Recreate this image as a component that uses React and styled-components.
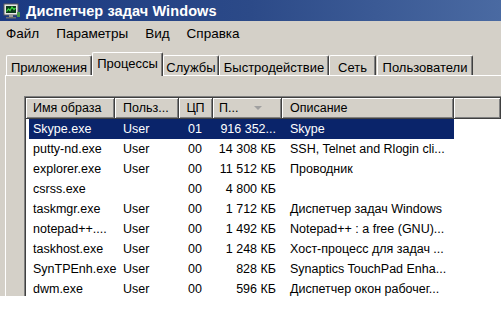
import styled, { createGlobalStyle } from "styled-components";

const GlobalStyle = createGlobalStyle`
  html, body {
    margin: 0;
    padding: 0;
    background: #ffffff;
  }
  body {
    font-family: "Liberation Sans", Arial, sans-serif;
  }
`;

const Window = styled.div`
  width: 501px;
  height: 296px;
  overflow: hidden;
  background-color: #d4d0c8;
  display: flex;
  flex-direction: column;
`;

const TitleBar = styled.div`
  height: 21px;
  flex-shrink: 0;
  display: flex;
  align-items: center;
  padding-left: 3px;
  gap: 6px;
  background: linear-gradient(to right, #1b3a82 0%, #2c4a88 50%, #4a6aa2 100%);
`;

const Title = styled.span`
  color: #ffffff;
  font-weight: 700;
  font-size: 14.5px;
  letter-spacing: 0.1px;
  white-space: nowrap;
`;

const MenuBar = styled.div`
  height: 24px;
  flex-shrink: 0;
  display: flex;
  align-items: center;
  padding-left: 6px;
  gap: 17px;
`;

const MenuItem = styled.span`
  font-size: 13.5px;
  color: #000000;
  white-space: nowrap;
`;

const TabStrip = styled.div`
  margin-top: 7px;
  padding-left: 6px;
  height: 23px;
  flex-shrink: 0;
  display: flex;
  align-items: flex-end;
  position: relative;
  z-index: 1;
`;

const Tab = styled.div`
  box-sizing: border-box;
  width: ${(props) => props.$w}px;
  margin-left: ${(props) => props.$gap || 0}px;
  height: ${(props) => (props.$active ? 24 : 20)}px;
  margin-bottom: ${(props) => (props.$active ? -1 : 0)}px;
  padding-top: ${(props) => (props.$active ? 3 : 4)}px;
  line-height: 16px;
  text-align: center;
  font-size: 13px;
  color: #000000;
  white-space: nowrap;
  background-color: #d4d0c8;
  border-top: 1px solid #ffffff;
  border-left: 1px solid #ffffff;
  border-right: 1px solid #404040;
  border-top-left-radius: 2px;
  border-top-right-radius: 2px;
  box-shadow: inset -1px 0 0 #808080;
`;

const Panel = styled.div`
  flex: 1;
  margin-left: 5px;
  border-top: 1px solid #ffffff;
  border-left: 1px solid #ffffff;
  padding: 20px 0 0 18px;
  display: flex;
  min-height: 0;
`;

const ListBox = styled.div`
  flex: 1;
  background-color: #ffffff;
  border-top: 1px solid #808080;
  border-left: 1px solid #808080;
  box-shadow: inset 1px 1px 0 #404040;
  padding: 1px 0 0 1px;
  display: flex;
  flex-direction: column;
`;

const HeaderRow = styled.div`
  display: flex;
  height: 21px;
  flex-shrink: 0;
`;

const HeaderCell = styled.div`
  box-sizing: border-box;
  width: ${(props) => (props.$w ? `${props.$w}px` : "auto")};
  flex: ${(props) => (props.$w ? "none" : 1)};
  display: flex;
  align-items: center;
  justify-content: ${(props) => (props.$center ? "center" : "flex-start")};
  padding-left: ${(props) => (props.$center ? 0 : props.$pad)}px;
  font-size: 12.5px;
  color: #000000;
  white-space: nowrap;
  background-color: #d4d0c8;
  border-right: 1px solid #404040;
  border-bottom: 1px solid #404040;
  box-shadow: inset 1px 1px 0 #ffffff, inset -1px -1px 0 #808080;
`;

const SortArrow = styled.span`
  width: 0;
  height: 0;
  margin-left: auto;
  margin-right: 19px;
  border-left: 4px solid transparent;
  border-right: 4px solid transparent;
  border-top: 4px solid #a0a0a0;
`;

const Rows = styled.div`
  display: flex;
  flex-direction: column;
  padding-left: 3px;
`;

const Row = styled.div`
  display: flex;
  height: 20px;
  width: 425px;
  background-color: ${(props) => (props.$selected ? "#0a246a" : "transparent")};
  color: ${(props) => (props.$selected ? "#ffffff" : "#000000")};
`;

const Cell = styled.div`
  box-sizing: border-box;
  width: ${(props) => props.$w}px;
  flex-shrink: 0;
  display: flex;
  align-items: center;
  justify-content: ${(props) => (props.$right ? "flex-end" : "flex-start")};
  padding-left: ${(props) => (props.$right ? 0 : props.$pad)}px;
  padding-right: ${(props) => (props.$right ? props.$pad : 0)}px;
  font-size: 12.5px;
  white-space: nowrap;
`;

const TaskIcon = () => (
  <svg width="17" height="16" viewBox="0 0 17 16">
    <rect x="1" y="1" width="14" height="11" fill="#e8e8e8" stroke="#5a5a5a" strokeWidth="1" />
    <rect x="3" y="3" width="10" height="7" fill="#0c3a1c" />
    <polyline points="3.5,8.5 5.5,6 7,7.5 9,4 11,6.5 12.5,5" fill="none" stroke="#44e044" strokeWidth="1.2" />
    <rect x="6" y="12" width="4" height="2" fill="#9a9a9a" />
    <rect x="3" y="14" width="10" height="1.5" fill="#6e6e6e" />
    <rect x="14" y="9" width="3" height="5" fill="#4a9a4a" />
  </svg>
);

const menu = ["Файл", "Параметры", "Вид", "Справка"];

const tabs = [
  { name: "Приложения", w: 86 },
  { name: "Процессы", w: 71, active: true },
  { name: "Службы", w: 56 },
  { name: "Быстродействие", w: 110 },
  { name: "Сеть", w: 47 },
  { name: "Пользователи", w: 96, gap: 1 },
];

const processes = [
  { name: "Skype.exe", user: "User", cpu: "01", mem: "916 352...", desc: "Skype", selected: true },
  { name: "putty-nd.exe", user: "User", cpu: "00", mem: "14 308 КБ", desc: "SSH, Telnet and Rlogin cli..." },
  { name: "explorer.exe", user: "User", cpu: "00", mem: "11 512 КБ", desc: "Проводник" },
  { name: "csrss.exe", user: "", cpu: "00", mem: "4 800 КБ", desc: "" },
  { name: "taskmgr.exe", user: "User", cpu: "00", mem: "1 712 КБ", desc: "Диспетчер задач Windows" },
  { name: "notepad++....", user: "User", cpu: "00", mem: "1 492 КБ", desc: "Notepad++ : a free (GNU)..." },
  { name: "taskhost.exe", user: "User", cpu: "00", mem: "1 248 КБ", desc: "Хост-процесс для задач ..." },
  { name: "SynTPEnh.exe", user: "User", cpu: "00", mem: "828 КБ", desc: "Synaptics TouchPad Enha..." },
  { name: "dwm.exe", user: "User", cpu: "00", mem: "596 КБ", desc: "Диспетчер окон рабочег..." },
];

const App = () => {
  return (
    <>
      <GlobalStyle />
      <Window>
        <TitleBar>
          <TaskIcon />
          <Title>Диспетчер задач Windows</Title>
        </TitleBar>
        <MenuBar>
          {menu.map((m) => (
            <MenuItem key={m}>{m}</MenuItem>
          ))}
        </MenuBar>
        <TabStrip>
          {tabs.map((t) => (
            <Tab key={t.name} $w={t.w} $active={t.active} $gap={t.gap}>
              {t.name}
            </Tab>
          ))}
        </TabStrip>
        <Panel>
          <ListBox>
            <HeaderRow>
              <HeaderCell $w={89} $pad={7}>Имя образа</HeaderCell>
              <HeaderCell $w={64} $pad={8}>Польз...</HeaderCell>
              <HeaderCell $w={34} $center>ЦП</HeaderCell>
              <HeaderCell $w={69} $pad={6}>
                П...
                <SortArrow />
              </HeaderCell>
              <HeaderCell $w={172} $pad={8}>Описание</HeaderCell>
              <HeaderCell />
            </HeaderRow>
            <Rows>
              {processes.map((p) => (
                <Row key={p.name} $selected={p.selected}>
                  <Cell $w={86} $pad={4}>{p.name}</Cell>
                  <Cell $w={64} $pad={8}>{p.user}</Cell>
                  <Cell $w={34} $right $pad={11}>{p.cpu}</Cell>
                  <Cell $w={69} $right $pad={6}>{p.mem}</Cell>
                  <Cell $w={172} $pad={8}>{p.desc}</Cell>
                </Row>
              ))}
            </Rows>
          </ListBox>
        </Panel>
      </Window>
    </>
  );
};

export default App;
